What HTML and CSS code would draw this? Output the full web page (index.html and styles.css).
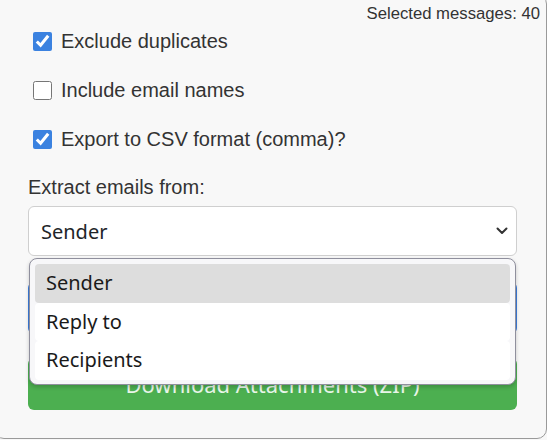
FILE: index.html
```html
<!DOCTYPE html>
<html lang="en">
<head>
    <meta charset="UTF-8">
    <meta name="viewport" content="width=device-width, initial-scale=1.0">
    <title>Email Extractor</title>
    <link rel="stylesheet" href="styles.css">
</head>
<body>
    <div class="panel">
        <div class="count">Selected messages: 40</div>
        <div class="form">
            <label class="option"><input type="checkbox" checked> Exclude duplicates</label>
            <label class="option"><input type="checkbox"> Include email names</label>
            <label class="option"><input type="checkbox" checked> Export to CSV format (comma)?</label>

            <div class="field-label">Extract emails from:</div>
            <div class="select-wrap">
                <div class="select">
                    <span>Sender</span>
                    <svg class="chevron" width="12" height="8" viewBox="0 0 12 8">
                        <path d="M1.5 1.5 L6 6 L10.5 1.5" fill="none" stroke="#333" stroke-width="2" stroke-linecap="round" stroke-linejoin="round"/>
                    </svg>
                </div>
                <!-- open dropdown list -->
                <div class="dropdown">
                    <div class="item active">Sender</div>
                    <div class="item">Reply to</div>
                    <div class="item">Recipients</div>
                </div>
            </div>

            <button class="btn btn-blue">Extract Emails</button>
            <button class="btn btn-green">Download Attachments (ZIP)</button>
        </div>
    </div>
</body>
</html>
```
FILE: styles.css
```css
/* Reset */
* {
    margin: 0;
    padding: 0;
    box-sizing: border-box;
}

body {
    font-family: 'Liberation Sans', Arial, sans-serif;
    background: #f8f8f8;
    overflow: hidden;
}

/* Popup window */
.panel {
    width: 553px;
    height: 445px;
    margin: -6px 0 0 -6px;
    border: 1px solid #9a9a9a;
    border-radius: 10px;
    background: #f8f8f8;
}

.count {
    margin: 10px 6px 0 0;
    text-align: right;
    font-size: 16.7px;
    line-height: 18px;
    color: #333;
}

.form {
    display: flex;
    flex-direction: column;
    padding: 0 29px 0 33px;
}

/* Checkbox rows */
.option {
    display: flex;
    align-items: center;
    gap: 9px;
    height: 30px;
    margin-top: 19px;
    padding-left: 5px;
    font-size: 20px;
    color: #333;
}

.option:first-of-type {
    margin-top: 3px;
}

.option input {
    width: 19px;
    height: 19px;
    margin: 0;
    accent-color: #3b82e0;
}

.field-label {
    margin-top: 22px;
    font-size: 20px;
    line-height: 22px;
    color: #333;
}

/* Select box */
.select-wrap {
    position: relative;
    margin-top: 8px;
}

.select {
    display: flex;
    align-items: center;
    justify-content: space-between;
    height: 50px;
    padding: 0 8px 0 12px;
    background: #fff;
    border: 1px solid #cfcfcf;
    border-radius: 6px;
    font-family: 'Noto Sans', sans-serif;
    font-size: 20px;
    color: #212529;
}

/* Open list overlaying the buttons */
.dropdown {
    position: absolute;
    top: 52px;
    left: 1px;
    right: 1px;
    z-index: 2;
    padding: 5px 5px 4px;
    background: #f7f7f9;
    border: 1px solid #8f8f9d;
    border-radius: 8px;
    box-shadow: 0 2px 4px rgba(0, 0, 0, 0.2);
    font-family: 'Noto Sans', sans-serif;
    font-size: 20px;
    color: #1a1a1a;
}

.item {
    height: 38.5px;
    line-height: 38.5px;
    padding-left: 11px;
    background: #fff;
    border-radius: 4px;
}

.item.active {
    background: #dddddd;
}

/* Buttons */
.btn {
    height: 52px;
    border: none;
    border-radius: 6px;
    font-family: 'Noto Sans', sans-serif;
    font-size: 22px;
    color: #fff;
}

.btn-blue {
    margin-top: 26px;
    background: #3b7ddd;
}

.btn-green {
    margin-top: 24px;
    background: #4caf50;
    color: #e8f5e9;
}
```
